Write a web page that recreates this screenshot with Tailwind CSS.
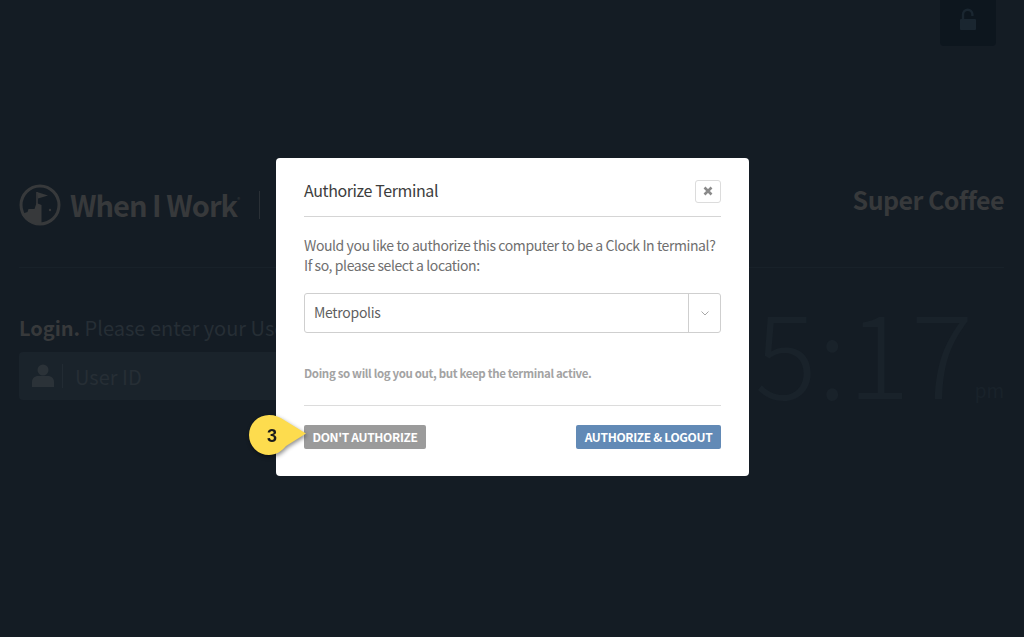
<!DOCTYPE html>
<html lang="en">
<head>
  <meta charset="UTF-8" />
  <title>Authorize Terminal</title>
  <script src="https://cdn.jsdelivr.net/npm/@tailwindcss/browser@4"></script>
</head>
<body class="bg-[#141c24] font-['Noto_Sans_CJK_SC','Source_Sans_Pro',sans-serif] overflow-hidden">
  <div class="relative h-[637px] w-[1024px] overflow-hidden">

    <!-- page behind the overlay -->
    <div class="pl-[19px] pr-5">
      <div class="flex justify-end pr-2">
        <div class="flex h-[46px] w-[56px] items-center justify-center rounded-b bg-[#0d161e]">
          <svg width="18" height="24" viewBox="0 0 18 24" class="mb-[6px]">
            <path d="M4 11V6.500a4.700 4.700 0 0 1 9.400 0V8" fill="none" stroke="#1a2630" stroke-width="2.400"/>
            <rect x="1" y="11" width="16" height="11" rx="1" fill="#1a2630"/>
          </svg>
        </div>
      </div>

      <div class="mt-[138px] flex h-[42px] items-center justify-between">
        <div class="flex items-center">
          <svg width="42" height="42" viewBox="0 0 42 42">
            <circle cx="21" cy="21" r="19" fill="none" stroke="#37393b" stroke-width="3"/>
            <path d="M22.500 40V21l-5-2-2 6h-6l-1 3-6 2a19 19 0 0 0 20 10z" fill="#37393b"/>
            <path d="M18 8l11 3.500-10 3z" fill="#37393b"/>
            <path d="M18 8v12" stroke="#37393b" stroke-width="1.600"/>
            <circle cx="31" cy="26" r="1.200" fill="#37393b"/>
          </svg>
          <span class="ml-[9px] mt-[-3px] text-[29px] leading-[38px] font-bold tracking-[-1px] text-[#37393b]">When I Work</span>
          <span class="mb-3 text-[6px] text-[#37393b]">®</span>
          <div class="ml-[19px] h-[28px] w-px bg-[#2a3036]"></div>
        </div>
        <span class="mt-[-12px] text-[25px] leading-[34px] font-bold tracking-[-0.55px] text-[#37393b]">Super Coffee</span>
      </div>

      <div class="mt-[41px] h-px bg-[#182129]"></div>

      <div class="flex justify-between">
        <div class="w-[640px]">
          <p class="mt-[43px] text-[20px] leading-[34px] text-[#262e35]"><b class="font-bold text-[#37393b]">Login.</b> Please enter your User ID</p>
          <div class="mt-[7px] flex h-[48px] items-center rounded bg-[#1a232b]">
            <svg width="22" height="24" viewBox="0 0 22 24" class="ml-[13px]">
              <circle cx="11" cy="6" r="5.500" fill="#2b3238"/>
              <path d="M0 23v-5c0-4 3-6 6-6h10c3 0 6 2 6 6v5z" fill="#2b3238"/>
            </svg>
            <div class="ml-[8px] h-[24px] w-px bg-[#222b33]"></div>
            <span class="ml-[12px] mt-[1px] text-[20px] text-[#262e35]">User ID</span>
          </div>
        </div>
        <div class="relative h-[150px] w-[260px]">
          <span class="absolute right-[30px] top-[5px] text-[116px] leading-[150px] font-extralight tracking-[1px] text-[#19222a]">5:17</span>
          <span class="absolute right-0 top-[108px] text-[19px] text-[#19222a]">pm</span>
        </div>
      </div>
    </div>

    <!-- modal -->
    <div class="absolute left-[276px] top-[158px] h-[318px] w-[473px] rounded bg-white px-[28px] text-[#6f6f6f]">
      <div class="flex h-[59px] items-center justify-between border-b border-[#d5d5d5] pt-[8px]">
        <h2 class="mt-[-2px] text-[16px] leading-6 font-normal tracking-[-0.4px] text-[#3d3d3d]">Authorize Terminal</h2>
        <button class="flex h-[23px] w-[26px] items-center justify-center rounded-[3px] border border-[#dcdcdc] bg-white">
          <svg width="10" height="10" viewBox="0 0 10 10">
            <path d="M1.500 1.500l7 7M8.500 1.500l-7 7" stroke="#8a8a8a" stroke-width="2.600"/>
          </svg>
        </button>
      </div>

      <p class="mt-[18px] text-[14px] leading-[20px] tracking-[-0.41px]">Would you like to authorize this computer to be a Clock In terminal?<br />If so, please select a location:</p>

      <div class="mt-[18px] flex h-[40px] items-stretch rounded-[3px] border border-[#cfcfcf]">
        <span class="flex-1 pl-[9px] text-[14px] leading-[37px] tracking-[-0.3px] text-[#5f5f5f]">Metropolis</span>
        <div class="flex w-[32px] items-center justify-center border-l border-[#cfcfcf]">
          <svg width="8" height="5" viewBox="0 0 8 5">
            <path d="M.5.5L4 4 7.500.5" fill="none" stroke="#a8a8a8"/>
          </svg>
        </div>
      </div>

      <p class="mt-[30px] text-[11.5px] leading-[20px] font-bold tracking-[-0.35px] text-[#a3a3a3]">Doing so will log you out, but keep the terminal active.</p>

      <div class="mt-[22px] border-t border-[#dcdcdc] pt-[19px]">
        <div class="flex items-center justify-between">
          <button class="h-[24px] w-[122px] rounded-[2px] bg-[#9b9b9b] text-[12px] leading-[22px] font-bold tracking-[-0.33px] text-white">DON'T AUTHORIZE</button>
          <button class="h-[24px] w-[145px] rounded-[2px] bg-[#628ab6] text-[12px] leading-[22px] font-bold tracking-[-0.33px] text-white">AUTHORIZE &amp; LOGOUT</button>
        </div>
      </div>
    </div>

    <!-- step callout -->
    <div class="absolute left-[249px] top-[415px] h-[41px] w-[62px] drop-shadow-[1px_2px_2px_rgba(0,0,0,0.45)]">
      <svg width="62" height="41" viewBox="0 0 62 41" class="absolute inset-0">
        <path d="M20 0C26 0 31 2 35 5L57 18.500 37 31C33 36 27 40 20 40A20 20 0 0 1 20 0z" fill="#fddc4e"/>
      </svg>
      <span class="absolute left-[18px] top-[10px] font-['Liberation_Sans',sans-serif] text-[18px] leading-[22px] font-bold text-[#1b1b1b]">3</span>
    </div>
  </div>
</body>
</html>
